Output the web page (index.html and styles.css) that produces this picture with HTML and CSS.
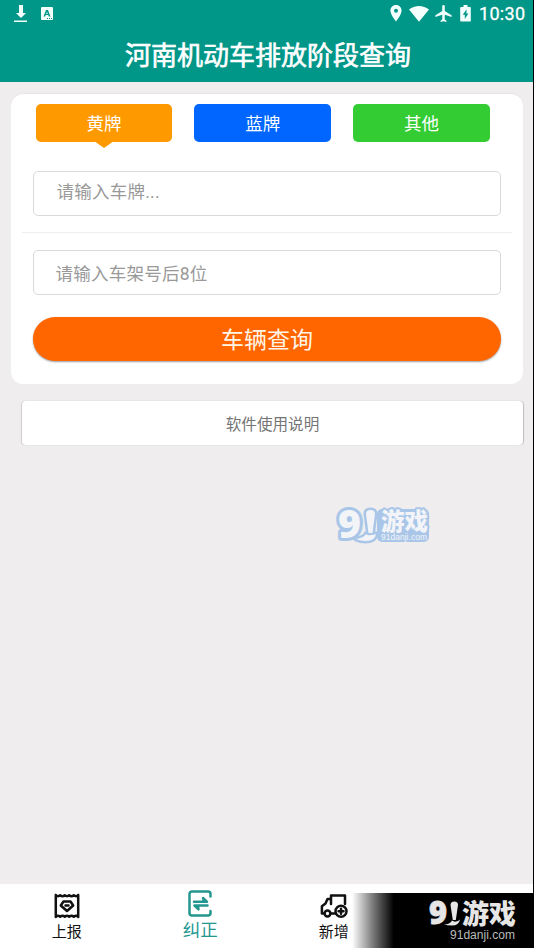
FILE: index.html
```
<!DOCTYPE html>
<html lang="zh-CN">
<head>
<meta charset="UTF-8">
<title>河南机动车排放阶段查询</title>
<link rel="stylesheet" href="styles.css">
</head>
<body>
<div class="app">
  <header class="header">
    <div class="status">
      <svg class="download" width="14" height="18" viewBox="0 0 14 18"><path d="M5 0h4v8h3l-5 5-5-5h3zM0 15.5h13v1.6H0z"/></svg>
      <span class="badge-a"><svg width="12" height="13" viewBox="0 0 12 13"><path fill-rule="evenodd" d="M1 0h10a1 1 0 0 1 1 1v11a1 1 0 0 1-1 1H1a1 1 0 0 1-1-1V1a1 1 0 0 1 1-1zm4 3L2.5 9.5h1.7l.5-1.4h2.6l.5 1.4h1.7L7 3zm1 1.800.8 2.100H5.200zM6 11v1h1v-1zm2 0v1h1v-1zm2 0v1h1v-1z"/></svg></span>
      <span class="spacer"></span>
      <svg class="pin" width="12" height="17" viewBox="0 0 12 17"><path fill-rule="evenodd" d="M6 0C2.6 0 .4 2.5.4 5.8.4 9.8 6 16.5 6 16.5s5.6-6.7 5.6-10.7C11.6 2.5 9.4 0 6 0zm0 3.8a2 2 0 1 1 0 4 2 2 0 0 1 0-4z"/></svg>
      <svg class="wifi" width="20" height="16" viewBox="0 0 20 16"><path d="M0 3.6C5.8-1.2 14.2-1.2 20 3.6L10 15.8z"/></svg>
      <svg class="plane" width="17" height="17" viewBox="2 2 19 20"><path d="M21 16v-2l-8-5V3.5a1.5 1.5 0 0 0-3 0V9l-8 5v2l8-2.5V19l-2 1.5V22l3.5-1 3.5 1v-1.5L13 19v-5.500z"/></svg>
      <svg class="battery" width="11" height="17" viewBox="0 0 11 17"><path fill-rule="evenodd" d="M3.500 0h4v2H10a.8.8 0 0 1 .8.8v13a.8.8 0 0 1-.8.8H1a.8.8 0 0 1-.8-.8v-13A.8.8 0 0 1 1 2h2.500zM6.600 4.200 2.800 9.800h2v4.200l3.600-5.500h-2z"/></svg>
      <span class="time">10:30</span>
    </div>
    <h1 class="title">河南机动车排放阶段查询</h1>
  </header>

  <main class="content">
    <section class="card">
      <div class="tabs">
        <button class="tab tab-yellow">黄牌</button>
        <button class="tab tab-blue">蓝牌</button>
        <button class="tab tab-green">其他</button>
      </div>
      <input class="field field-plate" placeholder="请输入车牌...">
      <div class="divider"></div>
      <input class="field field-frame" placeholder="请输入车架号后8位">
      <button class="submit">车辆查询</button>
    </section>
    <button class="manual">软件使用说明</button>
  </main>

  <svg class="watermark" width="104" height="48" viewBox="0 0 104 48">
    <rect class="halo-fill" x="47" y="6" width="52" height="33" rx="5"/>
    <text class="nine" x="8" y="35" textLength="23" lengthAdjust="spacingAndGlyphs">9</text>
    <path class="one" d="M36 11q0-4 4.500-4t4.500 4l-2.500 19h-4zM26 36q8-1 10-5 2 2 5 1 3 0 5-1-1 7-10 7-6 0-10-2z"/>
    <text class="game" x="51" y="27" textLength="47" lengthAdjust="spacingAndGlyphs">游戏</text>
    <text class="domain" x="51" y="37" textLength="46" lengthAdjust="spacingAndGlyphs">91danji.com</text>
  </svg>

  <nav class="nav">
    <a class="nav-item">
      <svg width="28" height="28" viewBox="0 0 28 28"><path d="M2.800 3v22M25.200 3v22M2.800 3.200q2.200 2 4.400 0 2.300 2 4.600 0 2.200 2 4.400 0 2.300 2 4.600 0 2.200 2 4.400 0M2.800 24.800q2.200-2 4.400 0 2.300-2 4.600 0 2.200-2 4.400 0 2.300-2 4.600 0 2.200-2 4.400 0M10.500 9.500h7l2.700 4L14 19l-6.200-5.500zM12.500 13.500h3"/></svg>
      <span>上报</span>
    </a>
    <a class="nav-item active">
      <svg width="28" height="29" viewBox="0 0 28 29"><path d="M24.500 7.500V5a2.500 2.500 0 0 0-2.500-2.500H6A2.500 2.500 0 0 0 3.500 5v19A2.500 2.500 0 0 0 6 26.500h16a2.500 2.500 0 0 0 2.500-2.500v-2M8 12.800h13l-4-3.800M21.500 16.500H8.500l4 3.800M17.500 9.500v3M12.300 17v3"/></svg>
      <span>纠正</span>
    </a>
    <a class="nav-item">
      <svg width="28" height="28" viewBox="0 0 28 28"><path d="M4 21.500H1.900v-7.200l3.600-2.800L7.500 7H11M11 12V3.500h14V12M10.500 21.500H15"/><circle cx="7.500" cy="21.500" r="2.900"/><circle cx="21" cy="19.300" r="5.500"/><path d="M18.500 19.300h5M21 16.800v5"/></svg>
      <span>新增</span>
    </a>
    <span class="nav-item"></span>
  </nav>

  <svg class="banner-logo" width="182" height="55" viewBox="0 0 182 55">
    <defs><linearGradient id="fade"><stop offset="0" stop-color="#000" stop-opacity="0"/><stop offset=".11" stop-color="#000" stop-opacity=".5"/><stop offset=".23" stop-color="#000"/></linearGradient></defs>
    <rect width="182" height="55" fill="url(#fade)"/>
    <text class="nine" x="77" y="31" textLength="18" lengthAdjust="spacingAndGlyphs">9</text>
    <path d="M98.500 12q0-3.500 3.800-3.500T106 12l-2.200 15h-3zM92 31.500q6 0 8-4 2 1.500 4 1 2 0 4-2-1 6-8 6-5 0-8-1z"/>
    <text class="game" x="110" y="31" textLength="54" lengthAdjust="spacingAndGlyphs">游戏</text>
    <text class="domain" x="98" y="46" textLength="65" lengthAdjust="spacingAndGlyphs">91danji.com</text>
  </svg>
  <div class="edge"></div>
</div>
</body>
</html>
```
FILE: styles.css
```
* { box-sizing: border-box; }
body {
  margin: 0;
  background: #efedee;
  font-family: Roboto, "Noto Sans CJK SC", sans-serif;
}
button, input { font: inherit; border: 0; padding: 0; }
.app {
  position: relative;
  display: flex;
  flex-direction: column;
  width: 534px;
  height: 948px;
  overflow: hidden;
}
.header { height: 82px; background: #009688; color: #fff; }
.status { display: flex; align-items: center; height: 27px; padding: 0 9px 0 14px; }
.status svg { display: block; fill: #f2fffc; }
.badge-a { margin-left: 13px; }
.spacer { flex: 1; }
.wifi { margin-left: 7px; }
.plane { margin-left: 6px; }
.battery { margin-left: 8px; }
.time { width: 46px; margin-left: 8px; font-size: 18px; font-weight: 400; -webkit-text-stroke: .3px; letter-spacing: .3px; white-space: nowrap; line-height: 27px; }
.title {
  margin: 9px 0 0;
  padding-left: 2px;
  text-align: center;
  font-size: 26px;
  font-weight: 400;
  line-height: 40px;
  -webkit-text-stroke: .6px #fff;
}
.content { flex: 1; padding: 12px 11px 0; }
.card {
  height: 289.500px;
  padding: 10px 22px 0;
  border-radius: 12px;
  background: #fff;
  box-shadow: 0 -.5px 0 #dedede;
}
.tabs { display: flex; gap: 22px; padding: 0 11px 0 2.500px; }
.tab {
  position: relative;
  width: 136.800px;
  height: 37.500px;
  padding-top: 3px;
  border-radius: 5px;
  color: #fff;
  font-size: 17.500px;
  line-height: 35px;
}
.tab-yellow { background: #ff9900; }
.tab-yellow::after {
  content: "";
  position: absolute;
  top: 37px;
  left: 58px;
  border: solid transparent;
  border-width: 7px 10.500px 0;
  border-top-color: #ff9900;
}
.tab-blue { background: #0066ff; }
.tab-green { background: #33cc33; }
.field {
  display: block;
  width: 468px;
  height: 45px;
  border: 1px solid #d8d9da;
  border-radius: 5px;
  background: #fff;
  font-size: 17.500px;
  letter-spacing: .25px;
}
.field::placeholder { color: #999; opacity: 1; }
.field-plate { margin-top: 29.500px; padding: 0 22.500px 4px; }
.field-frame { padding: 2px 21.500px 0; }
.divider { height: 1px; margin: 16px -11px 17px; background: #eee; }
.submit {
  display: block;
  width: 468px;
  height: 44px;
  margin-top: 22px;
  padding-top: 2px;
  border-radius: 22px;
  background: #ff6600;
  box-shadow: 0 1px 2px #0006;
  color: #fff5e7;
  font-size: 23px;
  line-height: 44px;
}
.manual {
  display: block;
  width: 501px;
  height: 44px;
  margin: 17.500px 0 0 11px;
  border-radius: 4px;
  background: #fff;
  box-shadow: -1px 0 1px #0002, 1px 0 1px #0003;
  color: #757575;
  font-size: 15.600px;
}
.nav { display: flex; height: 64px; background: #fff; }
.nav-item {
  display: flex;
  flex: 1;
  flex-direction: column;
  align-items: center;
  padding-top: 8px;
  color: #111;
  font-size: 15px;
  line-height: 24px;
}
.nav-item svg {
  fill: none;
  stroke: currentColor;
  stroke-width: 2.500;
  stroke-linecap: round;
  stroke-linejoin: round;
}
.active { padding-top: 5px; color: #24978e; font-size: 17.500px; }
.nine { font: 800 36px "Open Sans", Roboto, sans-serif; }
.game { font: 900 24px "Noto Sans CJK SC", sans-serif; }
.domain { font: 9px "Liberation Sans", sans-serif; }
.watermark {
  position: absolute;
  left: 330px;
  top: 503px;
  fill: #f2f4f8;
  stroke: #a9c6e8;
  stroke-width: 6;
  stroke-linejoin: round;
  paint-order: stroke;
}
.watermark .nine { font-size: 38px; }
.watermark .one { stroke-width: 5; }
.watermark .game { stroke-width: 4; }
.watermark .domain { stroke: none; }
.halo-fill { fill: #a9c6e8; stroke: none; }
.banner-logo { position: absolute; left: 352px; bottom: 0; fill: #e6e6e6; }
.banner-logo .nine { font-size: 31px; stroke: #e6e6e6; stroke-width: .8; }
.banner-logo .game { font-size: 27px; }
.banner-logo .domain { font-size: 12px; fill: #bbb; }
.edge { position: absolute; top: 0; right: 0; width: 1px; height: 948px; background: #000; }
```
